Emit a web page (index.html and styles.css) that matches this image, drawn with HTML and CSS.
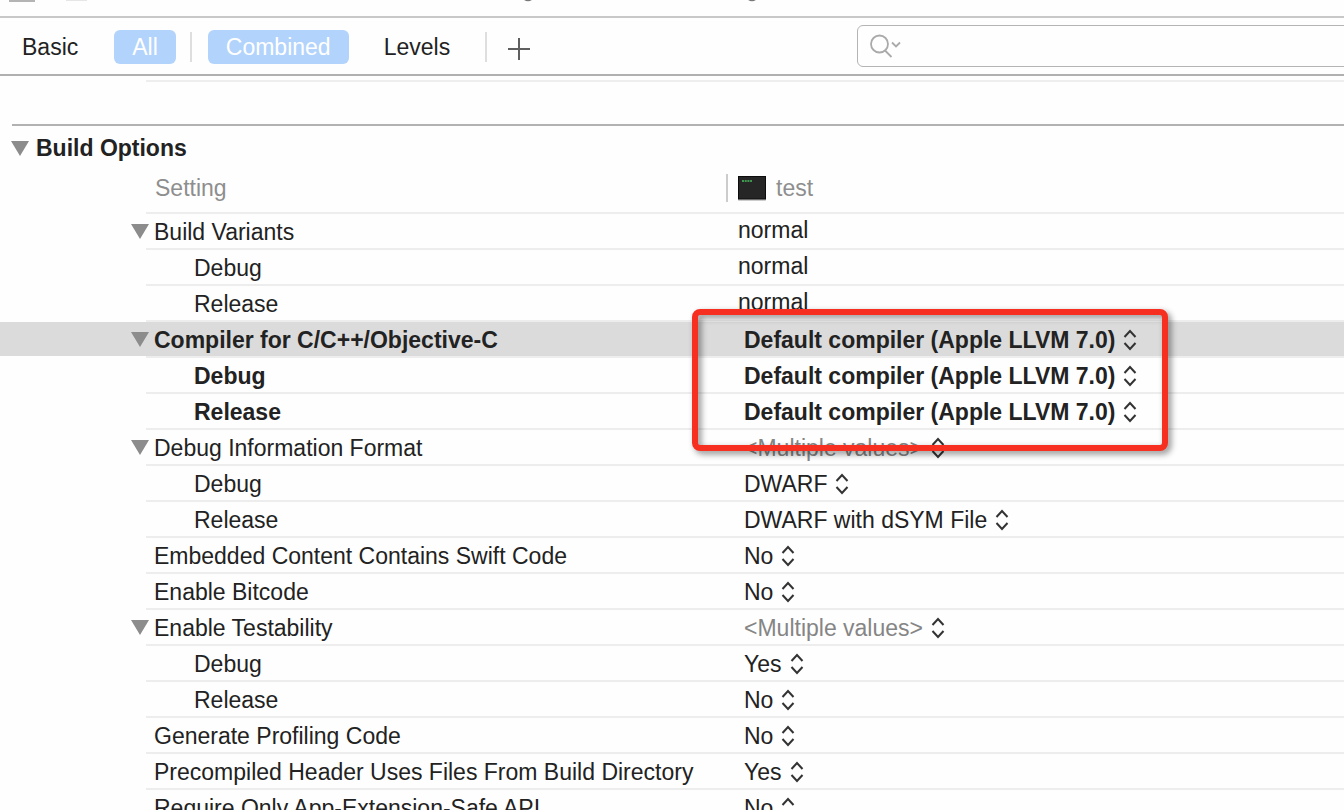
FILE: index.html
```
<!DOCTYPE html>
<html lang="en">
<head>
<meta charset="utf-8">
<title>Build Settings</title>
<link rel="stylesheet" href="styles.css">
</head>
<body>
<svg class="defs" aria-hidden="true">
  <symbol id="tri" viewBox="0 0 18 15"><path d="M0 0H18L9 15Z" fill="#8c8c8c"/></symbol>
  <symbol id="updown" viewBox="0 0 14 22"><path d="M1.500 8L7 2L12.500 8M1.500 14L7 20L12.500 14" fill="none" stroke="currentColor" stroke-width="2"/></symbol>
</svg>
<div class="tabstrip" aria-hidden="true">
  <svg width="800" height="3" viewBox="0 0 800 3"><path d="M9 0H35V2H9Z" fill="#b4b4b4"/><path d="M66 0H87V1H66Z" fill="#e6e6e6"/><path d="M524 -1Q528 2 532 -1M748 -1Q752 2 756 -1" fill="none" stroke="#777" stroke-width="1.500"/></svg>
</div>
<header class="toolbar">
  <nav class="filters">
    <button class="filter" type="button">Basic</button>
    <button class="filter on all" type="button">All</button>
    <span class="rule"></span>
    <button class="filter on" type="button">Combined</button>
    <button class="filter levels" type="button">Levels</button>
    <span class="rule last"></span>
    <button class="add" type="button" aria-label="Add build setting"><svg width="24" height="24" viewBox="0 0 24 24"><path d="M12 1V23M1 12H23" stroke="#5f5f5f" stroke-width="2"/></svg></button>
  </nav>
  <label class="search">
    <svg width="32" height="24" viewBox="0 0 32 24" fill="none" stroke="#aaa" stroke-width="1.800"><circle cx="9.500" cy="10" r="8.500"/><path d="M15 16.500L21.500 23M22 8.500L26 12.500L30 8.500"/></svg>
    <input type="search" aria-label="Search build settings">
  </label>
</header>
<main>
  <div class="previous"></div>
  <section class="section">
    <h2 class="title"><button class="toggle" type="button" aria-label="Collapse Build Options"><svg class="tri"><use href="#tri"/></svg></button>Build Options</h2>
    <table class="settings">
      <colgroup><col class="c-gutter"><col class="c-name"><col></colgroup>
      <thead><tr><td></td><th scope="col">Setting</th><th scope="col"><span class="target"><svg width="28" height="25" viewBox="0 0 28 25"><rect x="0" y="1" width="28" height="24" rx="1" fill="#ccc"/><rect x="0.500" y="0.500" width="27" height="22.500" fill="#262626" stroke="#0c0c0c"/><path d="M4 5H14" stroke="#3f9a50" stroke-width="2" stroke-dasharray="2 .7"/></svg>test</span></th></tr></thead>
      <tbody>
        <tr><td></td><th scope="row"><button class="toggle" type="button" aria-label="Collapse"><svg class="tri"><use href="#tri"/></svg></button>Build Variants</th><td class="plain">normal</td></tr>
        <tr class="sub"><td></td><th scope="row">Debug</th><td class="plain">normal</td></tr>
        <tr class="sub"><td></td><th scope="row">Release</th><td class="plain">normal</td></tr>
        <tr class="bold selected"><td></td><th scope="row"><button class="toggle" type="button" aria-label="Collapse"><svg class="tri"><use href="#tri"/></svg></button>Compiler for C/C++/Objective-C</th><td><label class="popup"><select aria-label="Compiler"><option>Default compiler (Apple LLVM 7.0)</option></select><svg><use href="#updown"/></svg></label></td></tr>
        <tr class="sub bold"><td></td><th scope="row">Debug</th><td><label class="popup"><select aria-label="Compiler, Debug"><option>Default compiler (Apple LLVM 7.0)</option></select><svg><use href="#updown"/></svg></label></td></tr>
        <tr class="sub bold"><td></td><th scope="row">Release</th><td><label class="popup"><select aria-label="Compiler, Release"><option>Default compiler (Apple LLVM 7.0)</option></select><svg><use href="#updown"/></svg></label></td></tr>
        <tr><td></td><th scope="row"><button class="toggle" type="button" aria-label="Collapse"><svg class="tri"><use href="#tri"/></svg></button>Debug Information Format</th><td><label class="popup mixed"><select aria-label="Debug Information Format"><option>&lt;Multiple values&gt;</option></select><svg><use href="#updown"/></svg></label></td></tr>
        <tr class="sub"><td></td><th scope="row">Debug</th><td><label class="popup"><select aria-label="Format, Debug"><option>DWARF</option></select><svg><use href="#updown"/></svg></label></td></tr>
        <tr class="sub"><td></td><th scope="row">Release</th><td><label class="popup"><select aria-label="Format, Release"><option>DWARF with dSYM File</option></select><svg><use href="#updown"/></svg></label></td></tr>
        <tr><td></td><th scope="row">Embedded Content Contains Swift Code</th><td><label class="popup"><select aria-label="Embedded Content Contains Swift Code"><option>No</option></select><svg><use href="#updown"/></svg></label></td></tr>
        <tr><td></td><th scope="row">Enable Bitcode</th><td><label class="popup"><select aria-label="Enable Bitcode"><option>No</option></select><svg><use href="#updown"/></svg></label></td></tr>
        <tr><td></td><th scope="row"><button class="toggle" type="button" aria-label="Collapse"><svg class="tri"><use href="#tri"/></svg></button>Enable Testability</th><td><label class="popup mixed"><select aria-label="Enable Testability"><option>&lt;Multiple values&gt;</option></select><svg><use href="#updown"/></svg></label></td></tr>
        <tr class="sub"><td></td><th scope="row">Debug</th><td><label class="popup"><select aria-label="Testability, Debug"><option>Yes</option></select><svg><use href="#updown"/></svg></label></td></tr>
        <tr class="sub"><td></td><th scope="row">Release</th><td><label class="popup"><select aria-label="Testability, Release"><option>No</option></select><svg><use href="#updown"/></svg></label></td></tr>
        <tr><td></td><th scope="row">Generate Profiling Code</th><td><label class="popup"><select aria-label="Generate Profiling Code"><option>No</option></select><svg><use href="#updown"/></svg></label></td></tr>
        <tr><td></td><th scope="row">Precompiled Header Uses Files From Build Directory</th><td><label class="popup"><select aria-label="Precompiled Header Uses Files From Build Directory"><option>Yes</option></select><svg><use href="#updown"/></svg></label></td></tr>
        <tr><td></td><th scope="row">Require Only App-Extension-Safe API</th><td><label class="popup"><select aria-label="Require Only App-Extension-Safe API"><option>No</option></select><svg><use href="#updown"/></svg></label></td></tr>
      </tbody>
    </table>
    <div class="callout"></div>
  </section>
</main>
</body>
</html>
```
FILE: styles.css
```
* { box-sizing: border-box; }
body {
  margin: 0;
  height: 100vh;
  overflow: hidden;
  background: #fefefe;
  color: #222;
  font: 23px/32px "Liberation Sans", Arial, sans-serif;
}
button, select, input {
  margin: 0;
  padding: 0;
  border: 0;
  background: none;
  color: inherit;
  font: inherit;
}
svg { display: block; flex: none; }
.defs { position: absolute; width: 0; height: 0; }

.tabstrip { height: 18px; border-bottom: 2px solid #c8c8c8; }
.toolbar {
  display: flex;
  height: 58px;
  padding-top: 7px;
  border-bottom: 2px solid #b0b0b0;
  overflow: hidden;
}
.filters {
  display: flex;
  flex: none;
  width: 857px;
  height: 34px;
  margin-top: 5px;
  padding-left: 4px;
  align-items: center;
}
.filter { height: 34px; padding: 0 18px; border-radius: 6px; }
.filter.on { background: #b2d3fc; color: #fff; }
.filter.all { margin-left: 18px; }
.filter.levels { margin-left: 17px; }
.rule { width: 2px; height: 30px; margin: 0 16px 0 14px; background: #dedede; }
.rule.last { margin: 0 20px 0 17px; }
.add { height: 24px; margin-top: 3px; }
.search {
  display: flex;
  flex: 1;
  height: 42px;
  margin-right: -8px;
  padding-left: 12px;
  align-items: center;
  gap: 8px;
  border: 1px solid #b4b4b4;
  border-radius: 6px;
}
.search input { flex: 1; outline: 0; }

.previous { height: 44px; border-top: 2px solid #eee; margin: 4px 0 0 146px; }
.section { position: relative; }
.section::before { content: ""; display: block; height: 2px; margin-left: 12px; background: #b2b2b2; }
.title {
  display: flex;
  align-items: center;
  height: 44px;
  margin: 0;
  padding-left: 11px;
  font-size: 23px;
  font-weight: bold;
}
.toggle { width: 18px; height: 15px; }
.tri { width: 18px; height: 15px; }
.title .toggle { margin-right: 7px; }

.settings {
  width: 100%;
  table-layout: fixed;
  border-collapse: separate;
  border-spacing: 0;
}
.c-gutter { width: 146px; }
.c-name { width: 580px; }
.settings th, .settings td {
  height: 36px;
  padding: 0;
  border-bottom: 2px solid #ededed;
  background-clip: padding-box;
  font-weight: normal;
  text-align: left;
  white-space: nowrap;
}
.settings td:first-child { border-color: transparent; }
.settings th { padding: 2px 0 0 8px; }
.settings .toggle { margin: 0 5px 0 -23px; vertical-align: 1px; }
.settings thead th { height: 44px; padding: 0 0 6px 9px; color: #8e8e8e; }
.settings thead th:last-child { padding-left: 0; }
.target {
  display: flex;
  align-items: center;
  height: 28px;
  padding-left: 10px;
  gap: 10px;
  border-left: 2px solid #ccc;
}
.settings .sub th { padding-left: 48px; }
.settings .plain { padding: 0 0 2px 12px; }
.settings .bold > * { font-weight: bold; }
.selected > * { background-color: #dbdbdb; }
.popup {
  display: flex;
  align-items: center;
  gap: 8px;
  height: 34px;
  padding: 2px 0 0 18px;
}
.popup select { height: 32px; appearance: none; field-sizing: content; }
.popup svg { width: 14px; height: 22px; color: #333; }
.mixed select { color: #858585; }

.callout {
  position: absolute;
  top: 185px;
  left: 692px;
  width: 476px;
  height: 142px;
  border: 6px solid #f72f20;
  border-radius: 8px;
  filter: drop-shadow(3px 3px 3px rgb(0 0 0 / 45%));
  pointer-events: none;
}
```
